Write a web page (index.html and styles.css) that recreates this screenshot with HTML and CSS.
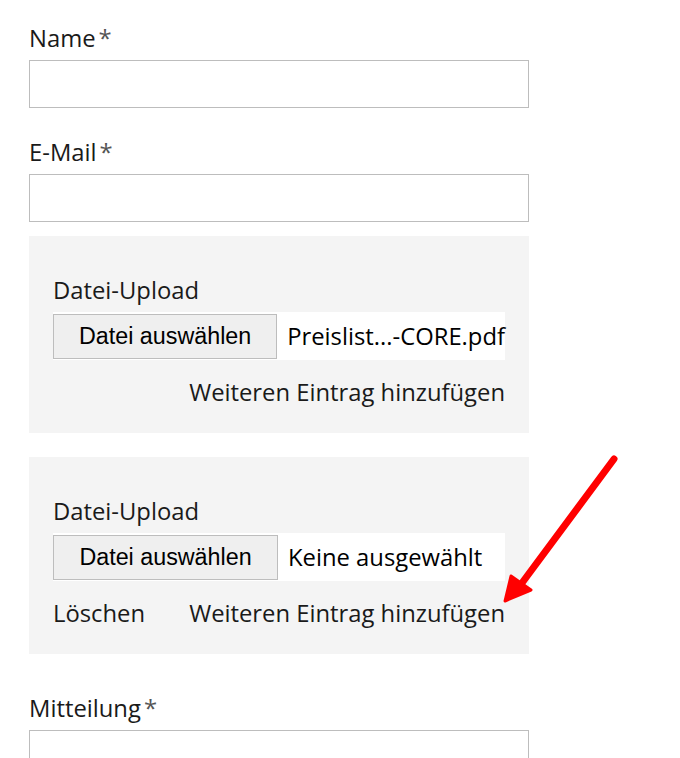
FILE: index.html
```html
<!DOCTYPE html>
<html lang="de">
<head>
    <meta charset="UTF-8">
    <meta name="viewport" content="width=device-width, initial-scale=1.0">
    <title>Kontakt</title>
    <link rel="stylesheet" href="styles.css">
</head>
<body>
    <form class="form">
        <div class="field">
            <label class="label" for="name">Name<span class="req">*</span></label>
            <input type="text" id="name" class="text-input">
        </div>

        <div class="field">
            <label class="label" for="email">E-Mail<span class="req">*</span></label>
            <input type="text" id="email" class="text-input">
        </div>

        <div class="upload-box">
            <div class="label">Datei-Upload</div>
            <div class="file-input">
                <button type="button" class="file-btn">Datei auswählen</button>
                <span class="file-name">Preislist...-CORE.pdf</span>
            </div>
            <div class="upload-actions">
                <span class="action add">Weiteren Eintrag hinzufügen</span>
            </div>
        </div>

        <div class="upload-box">
            <div class="label">Datei-Upload</div>
            <div class="file-input">
                <button type="button" class="file-btn">Datei auswählen</button>
                <span class="file-name">Keine ausgewählt</span>
            </div>
            <div class="upload-actions">
                <span class="action">Löschen</span>
                <span class="action add">Weiteren Eintrag hinzufügen</span>
            </div>
        </div>

        <div class="field">
            <label class="label" for="message">Mitteilung<span class="req">*</span></label>
            <textarea id="message" class="text-input message"></textarea>
        </div>
    </form>

    <!-- Markierung -->
    <svg class="arrow" width="680" height="758" viewBox="0 0 680 758">
        <line x1="614" y1="459" x2="519" y2="587" stroke="#ff0000" stroke-width="7" stroke-linecap="round"/>
        <polygon points="505,601 511,576 531,590" fill="#ff0000" stroke="#ff0000" stroke-width="3" stroke-linejoin="round"/>
    </svg>
</body>
</html>
```

FILE: styles.css
```css
body {
    margin: 0;
    padding: 8px 0 0 29px;
    font-family: "Open Sans", sans-serif;
    font-size: 23.8px;
    color: #1a1a1a;
    background: #fff;
}

.form {
    width: 500px;
}

.field {
    margin-bottom: 14px;
}

.label {
    display: block;
    padding-top: 14px;
    margin-bottom: 6px;
    line-height: 32px;
}

.req {
    color: #555;
    margin-left: 3px;
}

.text-input {
    display: block;
    box-sizing: border-box;
    width: 100%;
    height: 48px;
    margin: 0;
    border: 1px solid #bdbdbd;
    background: #fff;
}

.message {
    height: 120px;
    resize: none;
}

.upload-box {
    background-color: #f4f4f4;
    padding: 24px 24px 25px;
    margin-bottom: 24px;
}

.file-input {
    display: flex;
    align-items: center;
    height: 48px;
    background: #fff;
}

.file-btn {
    height: 45px;
    width: 225px;
    font-family: "Liberation Sans", Arial, sans-serif;
    font-size: 23.3px;
    color: #000;
    background-color: #efefef;
    border: 1px solid #bdbdbd;
    margin: 0 10px 0 0;
    padding: 0;
}

.file-name {
    color: #000;
    white-space: nowrap;
}

.upload-actions {
    display: flex;
    justify-content: space-between;
    margin-top: 16px;
    line-height: 32px;
}

.action.add {
    margin-left: auto;
}

.arrow {
    position: absolute;
    top: 0;
    left: 0;
    pointer-events: none;
}
```
